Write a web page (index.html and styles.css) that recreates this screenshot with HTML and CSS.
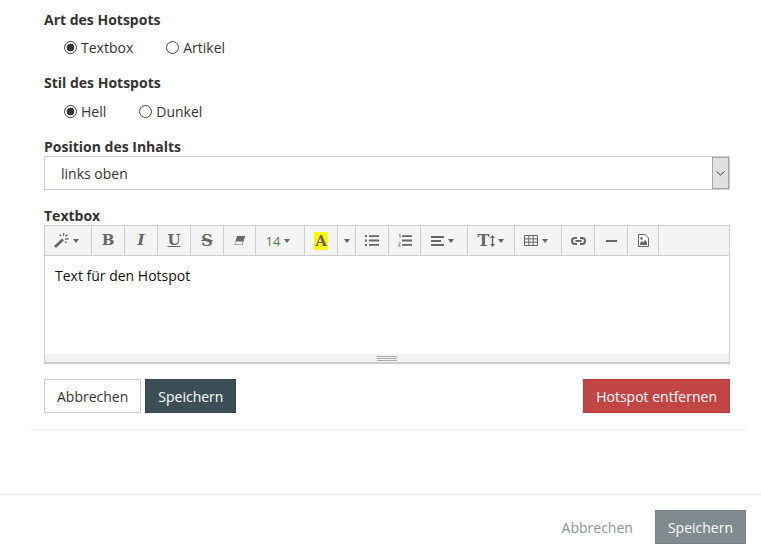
FILE: index.html
```html
<!DOCTYPE html>
<html lang="de">
<head>
    <meta charset="UTF-8">
    <title>Hotspot</title>
    <link rel="stylesheet" href="styles.css">
</head>
<body>
<div class="panel">
    <div class="form">
        <div class="label first">Art des Hotspots</div>
        <div class="radios">
            <label class="radio"><input type="radio" name="art" checked>Textbox</label>
            <label class="radio"><input type="radio" name="art">Artikel</label>
        </div>
        <div class="label second">Stil des Hotspots</div>
        <div class="radios radios-low">
            <label class="radio"><input type="radio" name="stil" checked>Hell</label>
            <label class="radio"><input type="radio" name="stil">Dunkel</label>
        </div>
        <div class="label third">Position des Inhalts</div>
        <div class="select">
            <span class="select-text">links oben</span>
            <span class="select-arrow">
                <svg width="9" height="5" viewBox="0 0 9 5"><path d="M.5.5l4 3.500 4-3.500" fill="none" stroke="#444" stroke-width="1"/></svg>
            </span>
        </div>
        <div class="label fourth">Textbox</div>
        <div class="editor">
            <div class="toolbar">
                <div class="tool tool-drop" style="width:47px">
                    <svg width="15" height="15" viewBox="0 0 15 15"><path d="M0 13L8 5.500l2 2L2 15z" fill="#666"/><path d="M9.500 0v3M13.500 1.500l-2 2M5.500 1.500l1.500 1.500M11 6h3.500M11 8.500l1.500 1.500" stroke="#777" stroke-width="1.400" fill="none"/></svg>
                    <i class="caret"></i>
                </div>
                <div class="tool" style="width:33px"><span class="glyph bold">B</span></div>
                <div class="tool" style="width:33px"><span class="glyph ital">I</span></div>
                <div class="tool" style="width:33px"><span class="glyph under">U</span></div>
                <div class="tool" style="width:33px"><span class="glyph strike">S</span></div>
                <div class="tool" style="width:32px">
                    <svg width="11" height="10" viewBox="0 0 11 10"><path d="M3 0h8L8.500 9H.5z" fill="#666"/><path d="M1.800 5.500h7L8 8.500H1.200z" fill="#f3f3f3"/></svg>
                </div>
                <div class="tool tool-drop size" style="width:49px">14<i class="caret"></i></div>
                <div class="tool" style="width:33px"><span class="glyph marker">A</span></div>
                <div class="tool" style="width:18px"><i class="caret"></i></div>
                <div class="tool" style="width:33px">
                    <svg width="14" height="11" viewBox="0 0 14 11"><path d="M0 0h2v2H0zM0 4.500h2v2H0zM0 9h2v2H0zM4 .2h10v1.800H4zM4 4.600h10v1.800H4zM4 9h10v1.800H4z" fill="#666"/></svg>
                </div>
                <div class="tool" style="width:32px">
                    <svg width="14" height="13" viewBox="0 0 14 13"><path d="M4 1.200h10V3H4zM4 5.600h10v1.800H4zM4 10h10v1.800H4z" fill="#666"/><path d="M1 .5h1v3.500M.3 9h2.200L.4 12h2.300" fill="none" stroke="#777" stroke-width=".8"/></svg>
                </div>
                <div class="tool tool-drop" style="width:47px">
                    <svg width="13" height="10" viewBox="0 0 13 10"><path d="M0 0h13v2H0zM0 4h10v2H0zM0 8h13v2H0z" fill="#666"/></svg>
                    <i class="caret"></i>
                </div>
                <div class="tool" style="width:47px">
                    <span class="glyph tsize">T</span>
                    <svg class="updown" width="5" height="12" viewBox="0 0 5 12"><path d="M2.500 0L5 3H3.200v6H5l-2.500 3L0 9h1.800V3H0z" fill="#666"/></svg>
                    <i class="caret"></i>
                </div>
                <div class="tool tool-drop" style="width:47px">
                    <svg width="14" height="11" viewBox="0 0 14 11"><path d="M.5.500h13v10H.5zM.5 3.800h13M.5 7.200h13M4.800.5v10M9.200.5v10" fill="none" stroke="#666"/></svg>
                    <i class="caret"></i>
                </div>
                <div class="tool" style="width:33px">
                    <svg width="15" height="8" viewBox="0 0 15 8"><path d="M6 1H4a3 3 0 000 6h2M9 1h2a3 3 0 010 6H9M4.500 4h6" fill="none" stroke="#666" stroke-width="2"/></svg>
                </div>
                <div class="tool" style="width:33px">
                    <svg width="11" height="2" viewBox="0 0 11 2"><path d="M0 0h11v2H0z" fill="#666"/></svg>
                </div>
                <div class="tool" style="width:31px">
                    <svg width="11" height="13" viewBox="0 0 11 13"><path d="M.5.500h6.500l3.500 3.500v8.500H.5z" fill="#fff" stroke="#666"/><path d="M2 11V9l2-2 1.500 1.500L7 6l2 2v3z" fill="#666"/><circle cx="3.500" cy="4.500" r="1.300" fill="#666"/></svg>
                </div>
            </div>
            <div class="content">Text für den Hotspot</div>
            <div class="statusbar"><div class="grip"></div></div>
        </div>
        <div class="actions">
            <button class="btn btn-default">Abbrechen</button>
            <button class="btn btn-dark">Speichern</button>
            <button class="btn btn-danger">Hotspot entfernen</button>
        </div>
    </div>
</div>
<div class="footer">
    <button class="btn btn-link">Abbrechen</button>
    <button class="btn btn-grey">Speichern</button>
</div>
</body>
</html>
```

FILE: styles.css
```css
* {
    box-sizing: border-box;
}
body {
    margin: 0;
    font-family: "Open Sans", "Liberation Sans", sans-serif;
    font-size: 14px;
    line-height: 20px;
    color: #333;
    background: #fff;
}
.panel {
    margin: 0 15px 0 28px;
    height: 430px;
    border-bottom: 1px solid #f0f0f0;
}
.form {
    padding: 0 16px;
}
.label {
    font-weight: 700;
}
.first {
    padding-top: 10px;
}
.second {
    margin-top: 10px;
}
.third {
    margin-top: 10px;
    height: 19px;
}
.fourth {
    margin-top: 16px;
    height: 19px;
}
.radios {
    display: flex;
    padding: 8px 0 0 20px;
    height: 33px;
}
.radios-low {
    padding-top: 9px;
    height: 34px;
}
.radio {
    display: flex;
    align-items: center;
    height: 20px;
    margin-right: 33px;
}
.radio input {
    appearance: none;
    width: 13px;
    height: 13px;
    margin: 0 4px 2px 0;
    border: 1px solid #444;
    border-radius: 50%;
    background: #fff;
}
.radio input:checked {
    background: radial-gradient(circle, #333 0, #333 3.5px, #fff 4.2px);
}
.select {
    display: flex;
    height: 34px;
    border: 1px solid #ccc;
}
.select-text {
    flex: 1;
    padding: 7px 15px 0 16px;
}
.select-arrow {
    display: flex;
    align-items: center;
    justify-content: center;
    width: 17px;
    background: #e0e0e0;
    border: 1px solid #a8a8a8;
}
.editor {
    border: 1px solid #ccc;
    border-bottom-width: 2px;
    height: 139px;
    display: flex;
    flex-direction: column;
}
.toolbar {
    display: flex;
    height: 30px;
    background: #f4f4f4;
    border-bottom: 1px solid #ccc;
}
.tool {
    display: flex;
    align-items: center;
    justify-content: center;
    gap: 3px;
    flex: none;
    border-right: 1px solid #ccc;
    color: #666;
}
.tool-drop {
    padding-right: 4px;
    gap: 4px;
}
.caret {
    width: 0;
    height: 0;
    border-left: 3px solid transparent;
    border-right: 3px solid transparent;
    border-top: 4px solid #666;
}
.size {
    font-size: 13px;
    color: #4d7f4d;
}
.glyph {
    font-family: "DejaVu Serif", "Liberation Serif", serif;
    font-size: 15px;
    line-height: 15px;
    color: #666;
    font-weight: 700;
}
.ital {
    font-style: italic;
}
.under {
    text-decoration: underline;
}
.strike {
    font-size: 16px;
    text-decoration: line-through;
}
.marker {
    background: #ff0;
    padding: 0 1px;
    line-height: 18px;
    font-size: 15px;
}
.tsize {
    font-size: 16px;
}
.updown {
    margin-left: -2px;
}
.content {
    flex: 1;
    padding: 10px;
    color: #111;
}
.statusbar {
    height: 8px;
    background: #f2f2f2;
    display: flex;
    justify-content: center;
    align-items: center;
}
.grip {
    width: 20px;
    height: 5px;
    border-top: 1px solid #aaa;
    border-bottom: 1px solid #aaa;
    background: linear-gradient(#aaa, #aaa) center / 100% 1px no-repeat;
}
.actions {
    display: flex;
    gap: 4px;
    margin-top: 15px;
}
.btn {
    height: 34px;
    padding: 2px 12px 0;
    font: inherit;
    border: 1px solid transparent;
    border-radius: 0;
    white-space: nowrap;
}
.btn-default {
    background: #fff;
    border-color: #ccc;
    color: #333;
}
.btn-dark {
    background: #3c4f57;
    border-color: #344750;
    color: #fff;
}
.btn-danger {
    margin-left: auto;
    background: #c04543;
    border-color: #b33d3b;
    color: #fff;
}
.footer {
    display: flex;
    justify-content: flex-end;
    align-items: center;
    gap: 9px;
    margin-top: 64px;
    padding: 15px 15px 15px 0;
    border-top: 1px solid #e5e5e5;
}
.btn-link {
    background: none;
    color: #8a9499;
}
.btn-grey {
    background: #7f8b8e;
    border-color: #768285;
    color: #fff;
}
```
